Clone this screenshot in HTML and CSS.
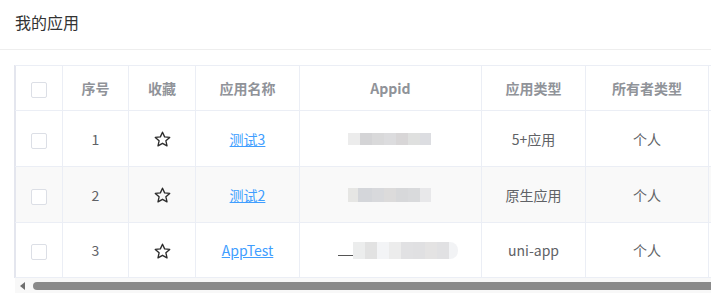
FILE: index.html
```html
<!DOCTYPE html>
<html>
<head>
<meta charset="utf-8">
<link rel="stylesheet" href="styles.css">
</head>
<body>
<div class="page-head">我的应用</div>
<div class="content">
  <div class="table-wrap">
    <table class="grid">
      <colgroup>
        <col class="c-check"><col class="c-no"><col class="c-fav"><col class="c-name"><col class="c-appid"><col class="c-type"><col class="c-owner"><col class="c-more">
      </colgroup>
      <thead>
        <tr>
          <th><span class="checkbox"></span></th>
          <th>序号</th>
          <th>收藏</th>
          <th>应用名称</th>
          <th>Appid</th>
          <th>应用类型</th>
          <th>所有者类型</th>
          <th></th>
        </tr>
      </thead>
      <tbody>
        <tr>
          <td><span class="checkbox"></span></td>
          <td>1</td>
          <td><svg class="star" viewBox="0 0 24 24"><path d="M12 2.8l2.7 5.9 6.4.7-4.8 4.3 1.4 6.3L12 16.8l-5.7 3.2 1.4-6.3-4.8-4.3 6.4-.7z"/></svg></td>
          <td><a class="link" href="#">测试3</a></td>
          <td><div class="blur blur-1"></div></td>
          <td>5+应用</td>
          <td>个人</td>
          <td></td>
        </tr>
        <tr class="striped">
          <td><span class="checkbox"></span></td>
          <td>2</td>
          <td><svg class="star" viewBox="0 0 24 24"><path d="M12 2.8l2.7 5.9 6.4.7-4.8 4.3 1.4 6.3L12 16.8l-5.7 3.2 1.4-6.3-4.8-4.3 6.4-.7z"/></svg></td>
          <td><a class="link" href="#">测试2</a></td>
          <td><div class="blur blur-2"></div></td>
          <td>原生应用</td>
          <td>个人</td>
          <td></td>
        </tr>
        <tr>
          <td><span class="checkbox"></span></td>
          <td>3</td>
          <td><svg class="star" viewBox="0 0 24 24"><path d="M12 2.8l2.7 5.9 6.4.7-4.8 4.3 1.4 6.3L12 16.8l-5.7 3.2 1.4-6.3-4.8-4.3 6.4-.7z"/></svg></td>
          <td><a class="link" href="#">AppTest</a></td>
          <td><div class="blur-row3"><span class="dash"></span><div class="blur blur-3"></div></div></td>
          <td>uni-app</td>
          <td>个人</td>
          <td></td>
        </tr>
      </tbody>
    </table>
  </div>
  <div class="hscroll">
    <span class="arrow"></span>
    <span class="thumb"></span>
  </div>
</div>
</body>
</html>
```

FILE: styles.css
```css
html, body {
  margin: 0;
  padding: 0;
  background: #fff;
  overflow: hidden;
}
body {
  font-family: "Noto Sans CJK SC", "Noto Sans", sans-serif;
  color: #606266;
  width: 711px;
  height: 293px;
}
.page-head {
  height: 49px;
  line-height: 45px;
  padding-left: 15px;
  font-size: 16px;
  color: #333;
  border-bottom: 1px solid #eeeeee;
}
.content {
  padding: 15px 0 0 14px;
}
.table-wrap {
  width: 697px;
  overflow: hidden;
  border-left: 1px solid #e4e6ee;
}
.grid {
  border-collapse: collapse;
  table-layout: fixed;
  width: 880px;
  font-size: 14px;
}
.c-check { width: 47px; }
.c-no { width: 66px; }
.c-fav { width: 67px; }
.c-name { width: 104px; }
.c-appid { width: 182px; }
.c-type { width: 104px; }
.c-owner { width: 123px; }
.c-more { width: 187px; }
.grid th, .grid td {
  border: 1px solid #ebeef5;
  text-align: center;
  padding: 0;
}
.grid th {
  height: 44px;
  font-weight: bold;
  color: #909399;
}
.grid td {
  height: 55px;
}
.grid tr:last-child td {
  height: 54px;
}
.grid tr > *:first-child {
  border-left-color: #e4e6ee;
}
.striped td {
  background: #f9f9f9;
}
.checkbox {
  display: inline-block;
  width: 14px;
  height: 14px;
  border: 1px solid #dcdfe6;
  border-radius: 2px;
  background: #fff;
  vertical-align: middle;
}
.star {
  width: 19px;
  height: 19px;
  vertical-align: middle;
  fill: none;
  stroke: #2b2b2b;
  stroke-width: 1.7;
  stroke-linejoin: round;
}
.link {
  color: #409eff;
  text-decoration: underline;
}
.blur {
  display: block;
  margin: 0 auto;
  height: 12px;
  width: 83px;
  position: relative;
  left: -1px;
  background: linear-gradient(90deg, #ececec 0 12px, #d4d4d6 12px 24px, #d9d9da 24px 36px, #dcdcde 36px 48px, #d8d6d7 48px 60px, #dfe0df 60px 72px, #dcdde1 72px 83px);
}
.blur-2 {
  height: 14px;
  width: 83px;
  background: linear-gradient(90deg, #e6e6e4 0 10px, #d4d6da 10px 24px, #d8d9dc 24px 36px, #dcdbdb 36px 48px, #d7d8da 48px 60px, #d9dadc 60px 72px, #e8e8ea 72px 83px);
}
.blur-row3 {
  display: flex;
  align-items: flex-end;
  justify-content: center;
  padding-left: 14px;
}
.dash {
  display: block;
  width: 15px;
  height: 1px;
  background: #555;
  margin-bottom: 3px;
}
.blur-3 {
  margin: 0;
  left: 0;
  height: 17px;
  width: 105px;
  border-radius: 0 8px 8px 0;
  background: linear-gradient(90deg, #eceded 0 12px, #e2e2e2 12px 24px, #f3f4f6 24px 36px, #ececec 36px 48px, #e1e1e3 48px 60px, #e0e0e2 60px 72px, #e4e3e3 72px 84px, #e1e1e3 84px 96px, #f2f3f5 96px 105px);
}
.hscroll {
  display: flex;
  align-items: center;
  height: 16px;
  background: #f8f8f8;
  margin-left: 1px;
}
.arrow {
  width: 0;
  height: 0;
  margin-left: 5px;
  border-top: 4px solid transparent;
  border-bottom: 4px solid transparent;
  border-right: 5px solid #6e6e6e;
}
.thumb {
  flex: 1;
  height: 8px;
  margin-left: 8px;
  background: #8a8a8a;
  border-radius: 4px 0 0 4px;
}
```
